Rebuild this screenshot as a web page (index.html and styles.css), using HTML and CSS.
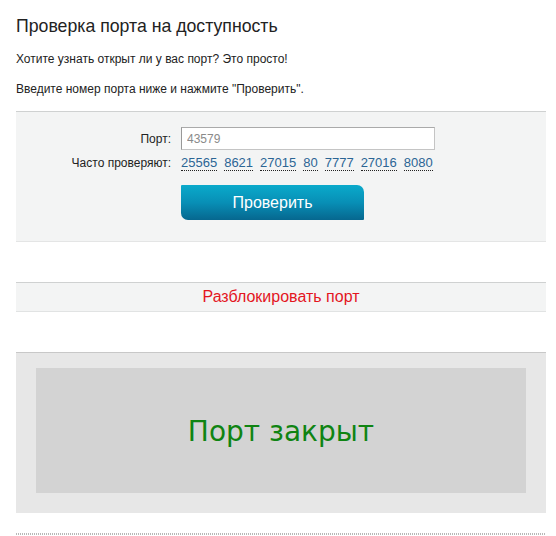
FILE: index.html
```html
<!DOCTYPE html>
<html lang="ru">
<head>
<meta charset="utf-8">
<title>Проверка порта на доступность</title>
<link rel="stylesheet" href="styles.css">
</head>
<body>
<div class="page">
  <h1 class="title">Проверка порта на доступность</h1>
  <p class="text first">Хотите узнать открыт ли у вас порт? Это просто!</p>
  <p class="text second">Введите номер порта ниже и нажмите "Проверить".</p>

  <div class="check-panel">
    <div class="form">
      <label class="label" for="port">Порт:</label>
      <input class="port-input" id="port" type="text" value="43579">
      <span class="label label-often">Часто проверяют:</span>
      <div class="often">
        <a class="port-link">25565</a>
        <a class="port-link">8621</a>
        <a class="port-link">27015</a>
        <a class="port-link">80</a>
        <a class="port-link">7777</a>
        <a class="port-link">27016</a>
        <a class="port-link">8080</a>
      </div>
      <span></span>
      <button class="check-btn" type="button">Проверить</button>
    </div>
  </div>

  <div class="unblock">Разблокировать порт</div>

  <div class="result">
    <div class="result-inner">Порт закрыт</div>
  </div>

  <div class="dotted"></div>
</div>
</body>
</html>
```

FILE: styles.css
```css
html, body {
  margin: 0;
  padding: 0;
  background: #fff;
}

.page {
  width: 530px;
  margin-left: 16px;
  font-family: "Liberation Sans", Arial, sans-serif;
  color: #222;
}

.title {
  margin: 0;
  padding-top: 14px;
  font-size: 17.7px;
  line-height: 24px;
  font-weight: normal;
  color: #222;
}

.text {
  margin: 0;
  font-size: 12px;
  line-height: 16px;
  color: #222;
}

.first { margin-top: 13px; }
.second { margin-top: 14px; }

.check-panel {
  margin-top: 14px;
  background: #f3f4f4;
  border-top: 1px solid #cfd1d1;
  border-bottom: 1px solid #e4e5e5;
  padding: 15px 0 21px;
}

.form {
  display: grid;
  grid-template-columns: 155px auto;
  column-gap: 10px;
  align-items: center;
}

.label {
  text-align: right;
  font-size: 12px;
  color: #222;
}

.label-often {
  margin-top: 6px;
  line-height: 14px;
  align-self: start;
}

.port-input {
  box-sizing: border-box;
  width: 254px;
  height: 23px;
  margin: 0;
  border: 1px solid #c4c4c4;
  border-left-color: #999;
  border-top-color: #aaa;
  background: #fff;
  padding: 0 5px;
  font-family: "Liberation Sans", Arial, sans-serif;
  font-size: 12px;
  color: #8a8a8a;
  outline: none;
}

.often {
  margin-top: 6px;
  display: flex;
  gap: 7px;
}

.port-link {
  font-size: 13px;
  line-height: 14px;
  color: #2b6594;
  border-bottom: 1px dotted #222;
  cursor: pointer;
}

.check-btn {
  margin-top: 14px;
  width: 183px;
  height: 35px;
  border: none;
  border-radius: 1px 7px 1px 7px;
  background: linear-gradient(to bottom, #0aaacb 0%, #088fb6 50%, #06678f 100%);
  color: #fff;
  font-family: "Liberation Sans", Arial, sans-serif;
  font-size: 16px;
  padding: 0;
  cursor: pointer;
}

.unblock {
  margin-top: 40px;
  height: 28px;
  line-height: 28px;
  background: #f3f4f4;
  border-top: 1px solid #cfd1d1;
  border-bottom: 1px solid #e1e3e3;
  text-align: center;
  font-size: 16px;
  color: #e3161f;
}

.result {
  margin-top: 40px;
  background: #e7e7e7;
  border-top: 1px solid #c8c8c8;
  padding: 15px 20px 20px;
}

.result-inner {
  height: 125px;
  background: #d3d3d3;
  display: flex;
  align-items: center;
  justify-content: center;
  font-family: "DejaVu Sans", Verdana, sans-serif;
  font-size: 28px;
  color: #0f8412;
  padding-top: 2px;
  box-sizing: border-box;
}

.dotted {
  margin-top: 20px;
  height: 2px;
  background: repeating-linear-gradient(to right, #b8b8b8 0 1px, transparent 1px 2px);
}
```
